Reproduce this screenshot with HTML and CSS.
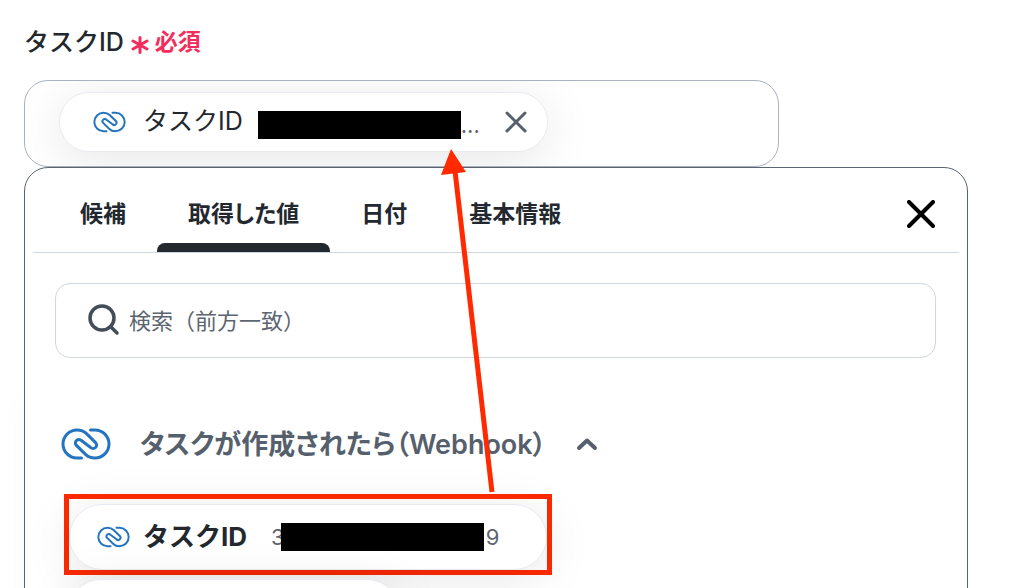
FILE: index.html
```
<!DOCTYPE html>
<html lang="ja">
<head>
    <meta charset="UTF-8">
    <meta name="viewport" content="width=device-width, initial-scale=1.0">
    <title>タスクID</title>
    <link rel="stylesheet" href="styles.css">
</head>
<body>
    <svg class="defs" aria-hidden="true">
        <symbol id="logo" viewBox="0 0 50 32">
            <path d="M20.500 30H16A14 14 0 0 1 16 2C20 2 23 3.200 25.200 5.400L34.600 14.600A3.500 3.500 0 0 1 29.600 19.500L20.400 12.500A3.500 3.500 0 0 0 15.400 17.400L24.800 26.600C27 28.800 30 30 34 30A14 14 0 0 0 34 2H29.500" />
        </symbol>
    </svg>

    <main class="page">
        <div class="field-label">
            <span id="task-label">タスクID</span>
            <svg class="asterisk" viewBox="0 0 18 18" aria-hidden="true">
                <path d="M9 1.500V16.500M2 5L16 13M16 5L2 13" />
            </svg>
            <span class="required">必須</span>
        </div>

        <div class="field" role="group" aria-labelledby="task-label">
            <div class="chip selected-chip">
                <svg class="logo-small"><use href="#logo" /></svg>
                <span class="chip-name">タスクID</span>
                <span class="chip-value"><span class="mask"></span>...</span>
                <button class="chip-remove" type="button" aria-label="削除">
                    <svg viewBox="0 0 22 22"><path d="M2 2L20 20M20 2L2 20" /></svg>
                </button>
            </div>
        </div>

        <section class="panel">
            <div class="tab-bar">
                <nav class="tabs">
                    <button class="tab" type="button">候補</button>
                    <button class="tab active" type="button">取得した値</button>
                    <button class="tab" type="button">日付</button>
                    <button class="tab" type="button">基本情報</button>
                </nav>
                <button class="panel-close" type="button" aria-label="閉じる">
                    <svg viewBox="0 0 28 28"><path d="M2 2L26 26M26 2L2 26" /></svg>
                </button>
            </div>

            <label class="search">
                <svg class="search-icon" viewBox="0 0 32 32" aria-hidden="true">
                    <circle cx="14" cy="13" r="12" />
                    <path d="M22.500 21.500L29 28" />
                </svg>
                <input type="text" aria-label="検索" placeholder="検索（前方一致）">
            </label>

            <button class="group-title" type="button">
                <svg class="logo-large"><use href="#logo" /></svg>
                <span>タスクが作成されたら（Webhook）</span>
                <svg class="chevron" viewBox="0 0 22 14"><path d="M3 11L11 3.500L19 11" /></svg>
            </button>

            <div class="highlight">
                <button class="chip option-chip" type="button">
                    <svg class="logo-small"><use href="#logo" /></svg>
                    <span class="chip-name">タスクID</span>
                    <span class="chip-value">3<span class="mask"></span>9</span>
                </button>
            </div>
            <div class="chip next-chip"></div>
        </section>

        <svg class="arrow" viewBox="0 0 60 350" aria-hidden="true">
            <path class="arrow-line" d="M52 343L15 22" />
            <path class="arrow-head" d="M11 0L26 23L1 26Z" />
        </svg>
    </main>
</body>
</html>
```
FILE: styles.css
```
* {
    box-sizing: border-box;
}
body {
    margin: 0;
    height: 100vh;
    overflow: hidden;
    background-color: #fff;
    color: #23282f;
    font-family: Inter, "Noto Sans CJK JP", sans-serif;
}
button {
    padding: 0;
    border: none;
    background: none;
    color: inherit;
    font: inherit;
    cursor: pointer;
}
svg {
    display: block;
    flex: none;
    fill: none;
    stroke: currentColor;
    stroke-linecap: round;
    stroke-linejoin: round;
}
.defs {
    position: absolute;
    width: 0;
    height: 0;
}
.page {
    position: relative;
    padding: 22px 54px 0 24px;
}
.field-label {
    display: flex;
    align-items: center;
    height: 36px;
    margin-bottom: 22px;
    font-size: 25px;
    font-weight: 500;
}
.asterisk {
    width: 18px;
    height: 18px;
    margin: 10px 6px 0 7px;
    color: #f42c5c;
    stroke-width: 3;
}
.required {
    color: #f42c5c;
    font-size: 23px;
    font-weight: 600;
}
.field {
    width: 80%;
    height: 87px;
    padding: 11px 34px;
    overflow: hidden;
    border: 1px solid #a9b2be;
    border-radius: 24px;
}
.chip {
    display: flex;
    align-items: center;
    border: 1px solid #e7ebf1;
    border-radius: 33px;
    background-color: #fff;
    box-shadow: 0 8px 50px rgba(0, 0, 0, 0.1);
}
.selected-chip {
    width: 489px;
    height: 60px;
    padding: 0 20px 0 33px;
}
.logo-small {
    width: 33px;
    height: 22px;
    color: #2474c0;
    stroke-width: 3;
}
.chip-name {
    padding-bottom: 6px;
    font-size: 25px;
}
.selected-chip .chip-name {
    margin: 0 15px 0 17px;
}
.chip-value {
    display: flex;
    align-items: center;
    color: #5c6571;
    font-size: 22px;
}
.mask {
    width: 203px;
    height: 28px;
    background-color: #000;
}
.selected-chip .chip-value {
    margin-top: 6px;
}
.chip-remove {
    margin-left: auto;
}
.chip-remove svg {
    width: 22px;
    height: 22px;
    color: #56606d;
    stroke-width: 3;
}
.panel {
    padding: 0 8px 24px;
    border: 1px solid #5a6470;
    border-radius: 24px;
    background-color: #fff;
    box-shadow: -10px 220px 30px -10px rgba(0, 0, 0, 0.03);
}
.tab-bar {
    display: flex;
    align-items: center;
    justify-content: space-between;
    height: 85px;
    padding: 0 24px 0 16px;
    border-bottom: 1px solid #cfd6df;
}
.tabs {
    display: flex;
    align-self: stretch;
}
.tab {
    position: relative;
    padding: 4px 31px 0;
    font-size: 23px;
    font-weight: 600;
    font-feature-settings: "palt";
}
.tab.active::after {
    content: "";
    position: absolute;
    right: 0;
    bottom: 0;
    left: 0;
    height: 9px;
    border-radius: 8px 8px 0 0;
    background-color: #23282f;
}
.panel-close svg {
    width: 28px;
    height: 28px;
    margin-top: 8px;
    color: #000;
    stroke-width: 4;
}
.search {
    display: flex;
    align-items: center;
    height: 75px;
    margin: 30px 23px 0 22px;
    padding: 0 32px;
    border: 1px solid #d0d7df;
    border-radius: 15px;
}
.search-icon {
    width: 32px;
    height: 32px;
    color: #434d59;
    stroke-width: 3.5;
    overflow: visible;
}
.search input {
    flex: 1;
    min-width: 0;
    padding: 0;
    margin-left: 9px;
    border: none;
    outline: none;
    background: none;
    font-family: inherit;
    font-size: 22px;
}
.search input::placeholder {
    color: #5c6571;
}
.group-title {
    display: flex;
    align-items: center;
    height: 44px;
    margin: 64px 0 0 28px;
    color: #56606d;
    font-size: 27px;
    font-weight: 600;
    font-feature-settings: "palt";
}
.group-title span {
    padding-bottom: 4px;
}
.logo-large {
    width: 50px;
    height: 32px;
    margin-right: 29px;
    color: #2474c0;
    stroke-width: 3;
}
.chevron {
    width: 22px;
    height: 14px;
    margin-left: 30px;
    stroke-width: 4;
}
.highlight {
    width: 488px;
    height: 81px;
    margin: 28px 0 0 31px;
    padding-top: 5px;
    border: 5px solid #ff2a00;
}
.option-chip {
    width: 100%;
    height: 66px;
    padding: 0 27px;
    border: 1px solid #e7ebf1;
    background-color: #fff;
}
.option-chip .chip-name {
    margin: 0 24px 0 13px;
    font-size: 26px;
    font-weight: 700;
}
.option-chip .mask {
    margin: 0 2px 0 -4px;
}
.next-chip {
    width: 332px;
    height: 66px;
    margin: 4px 0 0 35px;
}
/* pointer from the option up to the filled field */
.arrow {
    position: absolute;
    top: 149px;
    left: 440px;
    width: 60px;
    height: 350px;
    color: #ff2a00;
    pointer-events: none;
}
.arrow-line {
    stroke-width: 5;
    stroke-linecap: butt;
}
.arrow-head {
    fill: currentColor;
    stroke: none;
}
```
